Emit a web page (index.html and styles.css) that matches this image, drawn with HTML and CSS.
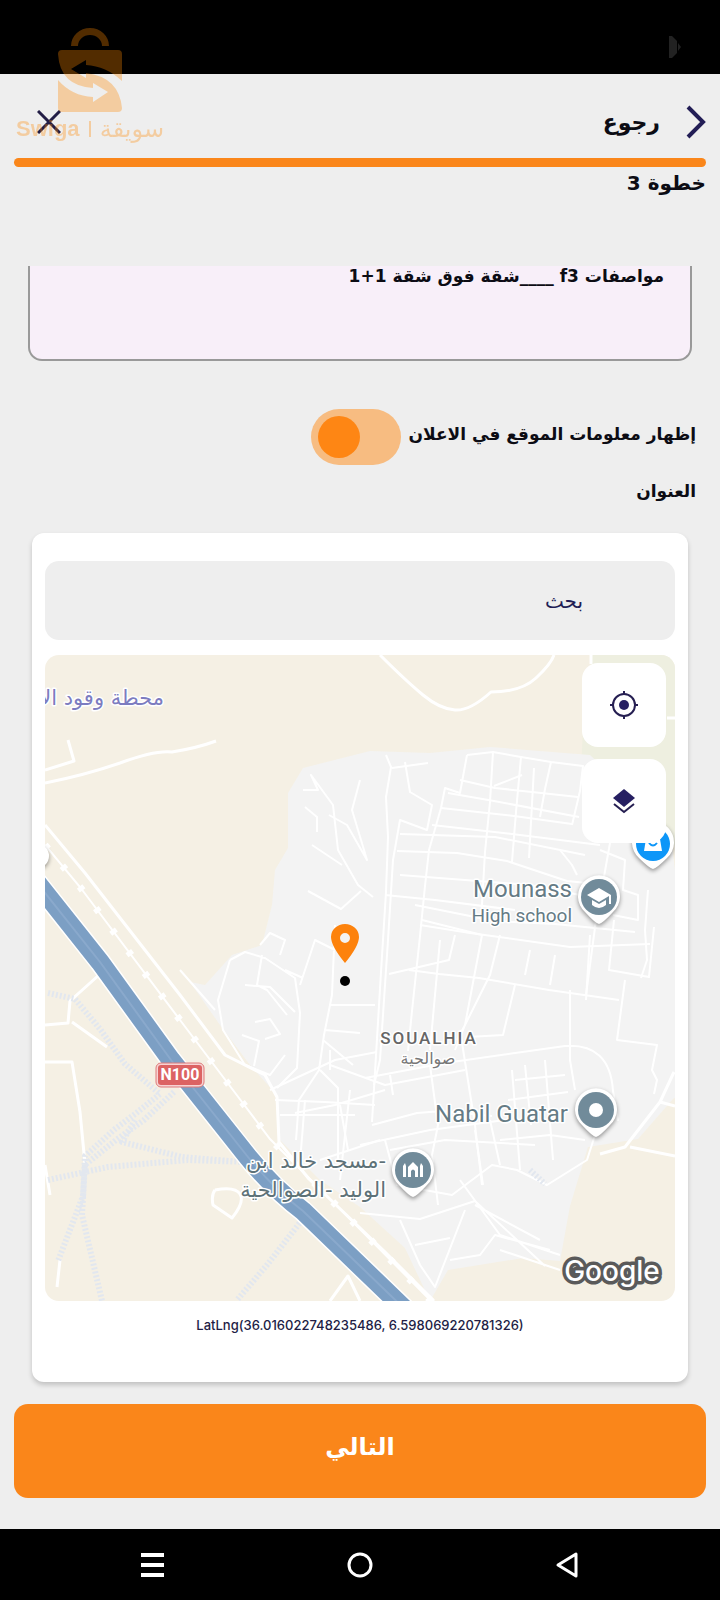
FILE: index.html
```html
<!DOCTYPE html>
<html lang="ar" dir="rtl">
<head>
<meta charset="utf-8">
<meta name="viewport" content="width=device-width, initial-scale=1">
<title>خطوة 3</title>
<link rel="stylesheet" href="styles.css">
</head>
<body>
<div class="status-bar">
  <svg class="status-icon" viewBox="0 0 14 24" aria-hidden="true"><path d="M1 1h3l5 5v12l-5 5H1z"/><path d="M10 8l3 4-3 4z"/></svg>
</div>

<div class="watermark" dir="ltr">
  <svg class="watermark-bag" viewBox="56 26 68 88" aria-hidden="true">
    <path d="M71 46a19 18 0 0 1 38 0h-7a12 11 0 0 0-24 0z"/>
    <path d="M62 50h56q4 0 4 4v27Q106 66 86 65v-5l-15 9 15 9v-5Q119 77 122 108q0 4-4 4H62q-4 0-4-4V80Q72 96 93 97v5l15-10-15-9v5Q60 86 58 54q0-4 4-4z"/>
  </svg>
  <div class="watermark-name"><b>Swiga</b><i></i><span lang="ar">سويقة</span></div>
</div>

<header class="top-bar">
  <button class="back" type="button">
    <svg class="chevron" viewBox="0 0 20 34" aria-hidden="true"><path d="M2 2l15 15L2 32"/></svg>
    <span>رجوع</span>
  </button>
  <button class="close" type="button" aria-label="إغلاق">
    <svg viewBox="0 0 24 24" aria-hidden="true"><path d="M1 1l22 22M23 1L1 23"/></svg>
  </button>
</header>
<div class="progress"></div>
<h1 class="step">خطوة 3</h1>

<main class="content">
  <textarea class="details" aria-label="مواصفات">مواصفات f3 ____شقة فوق شقة 1+1</textarea>

  <label class="switch-row">
    <span>إظهار معلومات الموقع في الاعلان</span>
    <input class="switch" type="checkbox" role="switch">
  </label>
  <h2 class="section-title">العنوان</h2>

  <section class="card">
    <input class="search" type="search" placeholder="بحث" aria-label="بحث">
    <div class="map">
      <svg class="map-canvas" viewBox="45 655 630 646" direction="ltr" role="img" aria-label="SOUALHIA">
        <rect class="land" x="45" y="655" width="630" height="646"/>
        <path class="park" d="M592 655h83v190l-20 15-75-70 3-60z"/>
        <path class="town" d="M303 768l-15 25v55l-13 22-3 35-10 40-30 10-27 30-15-3 30 43 30 40 27 30 3 45 40 40 40 27 45 41 25 53 18-31 75-12 37 3 10-55 18-59 50-8 35-40 14-8V900l-12-30-5-40-80-75-100-8-60 6-60-2z"/>
        <g class="road">
          <path d="M380 655q26 26 43 40t32 15 36-18q30 0 45-14t18-23M591 655v9M667 718h8M45 770l29-9-6-21M45 783q40-8 75-20 35-13 52-11 25-4 44-11"/>
          <path d="M45 825l40 48 95 122 45 60 40 20 12 22 2 45 30 37 75 72 50 50"/>
          <path d="M45 1025l23-2 2-22 29-26M72 1022l35 25M45 1062h27l8 50 5 52M45 1165l5 30M60 1260l-3 27"/>
          <path d="M675 1106l-15-4-35 45-25 7M630 1147l45 9M660 1102l14-30"/>
          <path d="M215 1190q20-4 25 4t-8 24l-19-13q-2-10 2-15M330 1301l18-25 12 25"/>
        </g>
        <g class="street">
          <path d="M303 790h15l-7-15 22 30 5 45 20 35 15 12M305 807l12 10v15M312 845l30 20M308 891l33 18 20-18"/>
          <path d="M360 780l-8 30 15 50-20-35-18-10M386 755l5 12-5 30 2 40-2 55-5 80-9 150"/>
          <path d="M405 762l5 30 22 13-5 25-27-10-7 40-5 80-8 120-6 25M392 768l36-5"/>
          <path d="M467 755l-7 38-15-5-4 20-12 42-4 36-5 50-8 75-4 40"/>
          <path d="M467 755l26-3 28 5 30 5 32 4-3 25-8 34M493 752l-3 50-5 50-4 70M521 757l-5 55-4 50M551 762l-6 27-5 28M534 768l-5 90"/>
          <path d="M460 780l35 8 37 4 46 5M448 793l46 8 85 16M441 808l73 8 58 8M432 825l80 9 88 11M400 834l95 3 90 18M397 851l60 2 50 8 60 20 50 5"/>
          <path d="M494 786l28-11M400 875l130 10 80 16M385 895l50 5 80 10M415 905l80 16 60 3 80 8M420 925l50 8 100 14 80-3"/>
          <path d="M610 843l-8 45-6 32-10 75M560 850l12 15 5 10M600 850l25 10-2 30 15 5v25l-25-5M648 890l-3 40 2 30-6 18M614 920l-5 50 40 7 5-50"/>
          <path d="M422 920l60 15-17 90-8 15M455 935l-6 25-60 14M409 970l30 4 40 4 70 12 70 10M500 935l-10 40-25 50-10 25M530 950l-5 25M555 955l-5 30M590 935l-4 65"/>
          <path d="M570 990v70l5 30M625 980l-8 60 40 5-5 25 5 10-3 14M515 985l-12 50-35 2M440 940l-10 110M460 1030l15 95 7 60M385 1090l-50 15-40 8M365 1078l80-15 120-17q45-3 48 45l5 30"/>
          <path d="M372 1125l45-12 25-2 50 5M360 1145l70-15 75-10M390 1075l3 20M430 1065l8 60-6 30 6 50M475 1130l8 55M490 1120l10 45M512 1070l8 100M525 1065l6 60M545 1060l8 100M515 1080l50-5M508 1100l60-8M500 1140l50-5 35 5"/>
          <path d="M390 1150l55-10 90 5M385 1140l12 45 55 10 40-30 25 5 30 15 40-25 8-25M360 1213l60 6 55-18 70 65M400 1220l20 45 15 22 30-77M415 1245l35-7M475 1205l65 35M450 1260l30-5 15-20 55 15M460 1180l40 55 60 20M500 1250l60 20"/>
          <path d="M230 960l15-8 20 6 30 20 5 35-3 55-20 20M260 945l10-12 15 7-5 15M262 955l-5 30 10 5 20 25M245 985l25 2 25 25M230 960l-12 40 5 30 22 35 25 10 15-20M180 970l35 40M242 1035l17 6-5 25M255 1022l15-3 10 15-15 5M300 985l15-45 20 10M285 970l18 8M335 925l-3 70-8 40-5 35-20 30-3 40M330 1005h45M325 1030l35 3M323 1040l30 25M330 1050v20M275 1100l50 2 50 3M280 1115h75M305 1100l-4 50M320 1070l18 18v75M340 1105l8 45"/>
          <path d="M270 1090l65-30 42-8M320 1160l60-20M330 1065l55 20 80-15M350 1090l-10 90"/>
        </g>
        <g class="trail">
          <path d="M48 993l27 6 25 30 25 35 35 30-25 20-20 15-30 27-2 40-25 65M85 1165l-3 50 20 86M174 1092l-30 28-28 20-30 24M135 1120l-13 22 60 15 60 5M48 1180l60-13 80-7 60 2M302 1220l-35 45-30 35M530 1170l15 14"/>
        </g>
        <path class="highway-edge" d="M30 874l70 88 71 98 77 97q26 32 55 54l112 108"/>
        <path class="highway" d="M30 874l70 88 71 98 77 97q26 32 55 54l112 108"/>
        <path class="highway-line" d="M30 874l70 88 71 98 77 97q26 32 55 54l112 108"/>
        <path class="railway" d="M45 845l35 42 100 133 62 82 28 37 70 70 95 96"/>
        <path class="railway-ties" d="M45 845l35 42 100 133 62 82 28 37 70 70 95 96"/>
        <circle class="pin-shell" cx="37" cy="856" r="12"/>

        <g class="shield"><rect x="156" y="1063" width="48" height="24" rx="5"/><rect class="shield-face" x="158" y="1065" width="44" height="20" rx="3"/><text x="180" y="1080">N100</text></g>

        <g class="pins">
          <path class="pin-shell" d="M653 869q-4-1-14-11a21 21 0 1 1 28 0q-10 10-14 11z"/>
          <circle class="shop" cx="653" cy="844" r="17"/><path class="glyph" d="M646 839h14l2 12h-18z"/><path class="shop-line" d="M649 843q4 5 8 0"/>
          <path class="pin-shell" d="M599 924q-4-1-14-12a21 21 0 1 1 28 0q-10 11-14 12z"/>
          <circle class="place" cx="599" cy="897" r="18"/><path class="glyph" d="M599 888l-12 7 12 7 10-6v8h2v-9zM592 900v5q7 6 14 0v-5l-7 4z"/>
          <path class="pin-shell" d="M596 1137q-4-1-14-12a21 21 0 1 1 28 0q-10 11-14 12z"/>
          <circle class="place" cx="596" cy="1110" r="18"/><circle class="glyph" cx="596" cy="1110" r="7"/>
          <path class="pin-shell" d="M413 1197q-4-1-14-12a21 21 0 1 1 28 0q-10 11-14 12z"/>
          <circle class="place" cx="413" cy="1170" r="18"/><path class="glyph" d="M403 1166l2-3 1 3v11h-3zM408 1177v-10l5-5 5 5v10h-3v-6q-2-3-4 0v6zM420 1166l1-3 2 3v11h-3z"/>
        </g>
        <g class="labels">
          <text class="place-name" x="572" y="897" text-anchor="end">Mounass</text>
          <text class="place-kind" x="572" y="922" text-anchor="end">High school</text>
          <text class="place-name" x="568" y="1122" text-anchor="end">Nabil Guatar</text>
          <text class="town-name" x="429" y="1044" text-anchor="middle">SOUALHIA</text>
          <text class="town-ar" x="428" y="1064" text-anchor="middle">صوالحية</text>
          <text class="mosque" x="386" y="1168" direction="rtl">-مسجد خالد ابن</text>
          <text class="mosque" x="386" y="1197" direction="rtl">الوليد -الصوالحية</text>
          <text class="station" x="164" y="705" direction="rtl">محطة وقود الا</text>
        </g>
        <path class="marker" fill-rule="evenodd" d="M345 963q-14-17-14-26a14 13 0 0 1 28 0q0 9-14 26zM345 933a5 5 0 1 0 0 10 5 5 0 0 0 0-10z"/>
        <circle class="marker-dot" cx="345" cy="981" r="5"/>
        <text class="google" x="612" y="1281" text-anchor="middle">Google</text>
      </svg>
      <div class="map-tools">
        <button type="button" aria-label="موقعي"><svg viewBox="0 0 28 28" aria-hidden="true"><circle class="ring" cx="14" cy="14" r="11"/><circle cx="14" cy="14" r="5"/><path class="ring" d="M14 0v4M14 24v4M0 14h4M24 14h4"/></svg></button>
        <button type="button" aria-label="الطبقات"><svg viewBox="0 0 28 28" aria-hidden="true"><path d="M14 2L3 11l11 9 11-9z"/><path class="ring" d="M4 17l10 8 10-8"/></svg></button>
      </div>
    </div>
    <p class="coordinates" dir="ltr">LatLng(36.016022748235486, 6.598069220781326)</p>
  </section>
</main>

<button class="next" type="button">التالي</button>

<nav class="system-nav">
  <button type="button" aria-label="رجوع"><svg viewBox="0 0 28 28" aria-hidden="true"><path d="M22 3v22L4 14z"/></svg></button>
  <button type="button" aria-label="الرئيسية"><svg viewBox="0 0 28 28" aria-hidden="true"><circle cx="14" cy="14" r="11"/></svg></button>
  <button type="button" aria-label="التطبيقات"><svg viewBox="0 0 28 28" aria-hidden="true"><path class="bars" d="M3 4h23M3 14h23M3 24h23"/></svg></button>
</nav>
</body>
</html>
```
FILE: styles.css
```css
* { box-sizing: border-box; }

body {
  margin: 0;
  min-height: 100vh;
  display: flex;
  flex-direction: column;
  position: relative;
  background: #eeeeee;
  color: #0c0c14;
  font-family: "DejaVu Sans", "Noto Sans", sans-serif;
}

button {
  border: 0;
  padding: 0;
  background: none;
  color: inherit;
  font: inherit;
}

svg { display: block; }

.status-bar {
  height: 74px;
  display: flex;
  align-items: center;
  padding: 20px 38px 0;
  background: #000;
}
.status-icon { width: 14px; height: 24px; fill: #222; }

.watermark {
  position: absolute;
  top: 26px;
  left: 16px;
  width: 148px;
  opacity: 0.32;
  color: #ff8800;
  pointer-events: none;
}
.watermark-bag { width: 68px; height: 88px; margin: 0 auto; fill: #ff8800; }
.watermark-name {
  display: flex;
  align-items: center;
  justify-content: space-between;
  height: 30px;
  font-size: 22px;
}
.watermark-name b { font-family: "Liberation Sans", sans-serif; }
.watermark-name span { font-size: 24px; line-height: 30px; }
.watermark-name i { width: 2px; height: 16px; background: #ff8800; }

.top-bar {
  height: 84px;
  display: flex;
  align-items: center;
  justify-content: space-between;
  padding: 12px 14px 0;
}
.back {
  display: flex;
  align-items: center;
  gap: 26px;
  font-size: 22px;
  font-weight: 700;
}
.chevron { width: 20px; height: 34px; fill: none; stroke: #221d55; stroke-width: 4; }
.close { padding: 0 23px; }
.close svg { width: 24px; height: 24px; fill: none; stroke: #221d45; stroke-width: 3; }

.progress { height: 9px; margin: 0 14px; border-radius: 5px; background: #fa861a; }

.step {
  margin: 0 14px;
  height: 99px;
  font-size: 20px;
  line-height: 32px;
  font-weight: 700;
}

.content { padding: 0 28px; }

.details {
  display: block;
  width: 100%;
  height: 95px;
  padding: 0 26px;
  border: 2px solid #999;
  border-top: 0;
  border-radius: 0 0 14px 14px;
  background: #f8eff9;
  color: inherit;
  font: 700 17px/20px "DejaVu Sans", "Noto Sans", sans-serif;
  resize: none;
  outline: 0;
}

.switch-row {
  display: flex;
  align-items: center;
  gap: 8px;
  height: 56px;
  margin: 48px -4px 0;
  font-size: 17px;
  font-weight: 700;
}
.switch-row span { padding-bottom: 6px; }
.switch {
  appearance: none;
  width: 90px;
  height: 56px;
  margin: 0;
  padding: 7px;
  display: flex;
  justify-content: flex-end;
  border-radius: 28px;
  background: #f7bc81;
}
.switch::before {
  content: "";
  width: 42px;
  height: 42px;
  border-radius: 50%;
  background: #fe8614;
}

.section-title {
  margin: 10px -4px 0;
  font-size: 17px;
  line-height: 32px;
  font-weight: 700;
}

.card {
  margin: 26px 4px 0;
  padding: 28px 13px 0;
  border-radius: 12px;
  background: #fff;
  box-shadow: 0 3px 5px #00000030;
}
.search {
  display: block;
  width: 100%;
  height: 79px;
  padding: 0 92px;
  border: 0;
  border-radius: 14px;
  background: #eeeeee;
  font: 20px "DejaVu Sans", "Noto Sans", sans-serif;
}
.search::placeholder { color: #221d55; opacity: 1; }

.map {
  position: relative;
  margin-top: 15px;
  border-radius: 14px;
  overflow: hidden;
}
.map-canvas { width: 100%; height: auto; }
.map-tools {
  position: absolute;
  top: 8px;
  right: 9px;
  display: grid;
  gap: 12px;
}
.map-tools button {
  width: 84px;
  height: 84px;
  display: grid;
  place-items: center;
  border-radius: 16px;
  background: #fff;
}
.map-tools svg { width: 28px; height: 28px; fill: #261f62; }
.map-tools .ring { fill: none; stroke: #261f52; stroke-width: 2; }

.land { fill: #f5f0e4; }
.park { fill: #eeefe0; }
.town { fill: #f3f3f3; }
.road, .street, .trail { fill: none; stroke: #fff; stroke-linejoin: round; }
.road { stroke-width: 3; }
.street { stroke-width: 2; }
.trail { stroke: #e2e7ef; stroke-width: 6; stroke-dasharray: 2 2; }
.railway, .railway-ties { fill: none; stroke: #fff; stroke-width: 2; }
.railway-ties { stroke-width: 7; stroke-dasharray: 5 22; }
.highway-edge, .highway, .highway-line { fill: none; }
.highway-edge { stroke: #fff; stroke-width: 22; }
.highway { stroke: #7c9fc4; stroke-width: 19; }
.highway-line { stroke: #8aa9cc; stroke-width: 2; }

.shield rect { fill: #f7d3d3; stroke: #de7a7a; stroke-width: 1; }
.shield .shield-face { fill: #dc6363; stroke: none; }
.shield text { fill: #fff; font: 700 16px Roboto, sans-serif; text-anchor: middle; }

.pin-shell { fill: #fff; filter: drop-shadow(0 2px 2px #00000066); }
.place { fill: #718b9a; }
.shop { fill: #0d96f8; }
.shop-line { fill: none; stroke: #0d96f8; stroke-width: 2; }
.glyph { fill: #fff; }
.labels text { stroke: #fff; stroke-width: 3; paint-order: stroke; stroke-linejoin: round; }
.place-name { fill: #657b85; font: 24px Roboto, sans-serif; }
.place-kind { fill: #657b85; font: 19px Roboto, sans-serif; }
.town-name { fill: #666; font: 500 17px Roboto, sans-serif; letter-spacing: 2px; }
.town-ar { fill: #777; font: 16px "DejaVu Sans", sans-serif; }
.mosque { fill: #5e7278; font: 21px "DejaVu Sans", sans-serif; }
.station { fill: #7c7cc0; font: 21px "DejaVu Sans", sans-serif; }
.marker { fill: #fd820c; }
.marker-dot { fill: #000; }
.google {
  fill: #fff;
  stroke: #5a5a5a;
  stroke-width: 7;
  stroke-linejoin: round;
  paint-order: stroke;
  font: 500 28px Inter, sans-serif;
}

.coordinates {
  margin: 0;
  padding: 14px 0 47px;
  text-align: center;
  font: 500 13px/20px Inter, sans-serif;
  color: #221d45;
}

.next {
  height: 94px;
  margin: 22px 14px 0;
  padding-bottom: 8px;
  border-radius: 14px;
  background: #fa861a;
  color: #fff;
  font-size: 24px;
  font-weight: 700;
}

.system-nav {
  height: 71px;
  margin-top: auto;
  display: flex;
  align-items: center;
  justify-content: space-evenly;
  padding: 0 48px;
  background: #000;
}
.system-nav button { flex: 1; display: grid; place-items: center; }
.system-nav svg { width: 28px; height: 28px; fill: none; stroke: #fff; stroke-width: 3; stroke-linejoin: round; }
.system-nav .bars { stroke-width: 4; }
```
